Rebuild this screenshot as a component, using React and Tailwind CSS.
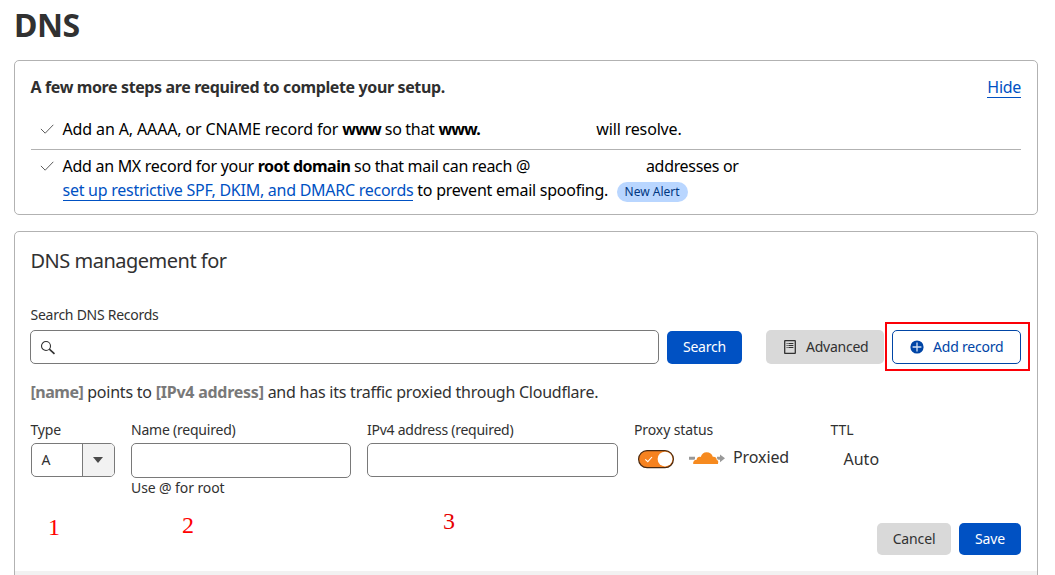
function Check() {
  return (
    <svg className="mt-[5px] h-[14px] w-[32px] shrink-0" viewBox="0 0 32 14" fill="none" stroke="#5c5c5c" strokeWidth="1">
      <path d="M9.9 6.9 L14.2 11.2 L22.3 2.8" />
    </svg>
  );
}

function SetupSteps() {
  return (
    <section className="mt-[11px] h-[155px] rounded-[5px] border border-[#b2b2b2] pl-[15.5px] pr-[16px] pt-[14px]">
      <div className="flex items-start justify-between">
        <h2 className="font-bold tracking-[-0.38px] text-[#2f2f2f]">A few more steps are required to complete your setup.</h2>
        <a className="h-[23px] border-b border-[#0051c3] tracking-[-0.3px] text-[#0051c3]">Hide</a>
      </div>
      <div className="mt-[18px] flex h-[33px] border-b border-[#b2b2b2]">
        <Check />
        <p>
          <span className="tracking-[-0.13px]">Add an A, AAAA, or CNAME record for </span>
          <b className="tracking-[-0.85px]">www</b>
          <span className="tracking-[-0.3px]"> so that </span>
          <b className="tracking-[-0.9px]">www.</b>
          <span className="ml-[116.5px] tracking-[-0.16px]">will resolve.</span>
        </p>
      </div>
      <div className="mt-[4px] flex">
        <Check />
        <div>
          <p>
            <span className="tracking-[-0.28px]">Add an MX record for your </span>
            <b className="tracking-[-0.54px]">root domain</b>
            <span className="tracking-[-0.32px]"> so that mail can reach @</span>
            <span className="ml-[116px] tracking-[-0.32px]">addresses or</span>
          </p>
          <div className="flex">
            <a className="h-[23px] border-b border-[#0051c3] tracking-[-0.26px] text-[#0051c3]">set up restrictive SPF, DKIM, and DMARC records</a>
            <span className="whitespace-pre tracking-[-0.25px]"> to prevent email spoofing.</span>
            <span className="ml-[9px] mt-[4px] flex h-[20px] w-[71px] items-center justify-center rounded-full bg-[#b9d6ff] pr-px text-[12px] text-[#003681]">New Alert</span>
          </div>
        </div>
      </div>
    </section>
  );
}

function SearchBar() {
  return (
    <div className="flex">
      <div className="-ml-[0.5px] h-[34px] w-[629px] rounded-[5px] border border-[#797979]">
        <svg className="ml-[9px] mt-[9px] h-[16px] w-[16px]" viewBox="0 0 16 16" fill="none" stroke="#313131">
          <circle cx="6" cy="6" r="4.5" strokeWidth="1.1" />
          <path d="M9.3 9.2 L14.5 13.9" strokeWidth="1.6" />
        </svg>
      </div>
      <button className="ml-[8px] mt-px flex h-[33px] w-[75px] items-center justify-center rounded-[5px] bg-[#0051c3] pb-[2px] text-[14px] tracking-[-0.2px] text-white">Search</button>
      <button className="ml-[24px] flex h-[34px] w-[118px] items-center rounded-[5px] bg-[#d9d9d9] pl-[18px] text-[14px] tracking-[-0.25px] text-[#313131]">
        <svg className="mr-[10px] h-[14px] w-[12px]" viewBox="0 0 12 14" fill="none" stroke="#313131">
          <rect x="0.7" y="0.7" width="10.6" height="12.6" rx="0.4" strokeWidth="1.3" />
          <path d="M2.6 3.5h1M4.4 3.5h5M2.6 5.5h1M4.4 5.5h5M2.6 7.5h1M4.4 7.5h5" strokeWidth="1" />
        </svg>
        Advanced
      </button>
      <div className="relative ml-[8px]">
        <button className="flex h-[34px] w-[129px] items-center rounded-[5px] border border-[#0045a6] pl-[17px] text-[14px] tracking-[-0.2px] text-[#0045a6]">
          <svg className="mr-[9px] h-[14px] w-[14px] shrink-0" viewBox="0 0 14 14">
            <circle cx="7" cy="7" r="6.6" fill="#0045a6" />
            <path d="M7 2.600v8.800M2.600 7h8.800" stroke="#d5e2f5" strokeWidth="1.3" />
          </svg>
          Add record
        </button>
        <div className="absolute -left-[7px] -top-[8px] h-[49px] w-[145px] border-2 border-[#fb0007]" />
      </div>
    </div>
  );
}

function ProxyStatus() {
  return (
    <div className="w-[196.5px]">
      <p className="text-[14px] leading-[20px] tracking-[-0.1px]">Proxy status</p>
      <div className="flex pl-[4px] pt-[4px]">
        <svg className="mt-[6px] h-[19px] w-[36px]" viewBox="0 0 36 19">
          <rect x="0.6" y="0.6" width="34.8" height="17.1" rx="8.5" fill="#f6821f" stroke="#4a2a12" strokeWidth="1.2" />
          <circle cx="27" cy="9.1" r="7.4" fill="#fff" />
          <path d="M7.3 9.3 L9.8 11.7 L14 7" fill="none" stroke="#fff" strokeWidth="1.1" />
        </svg>
        <svg className="ml-[15px] mt-[8px] h-[14px] w-[36px]" viewBox="0 0 36 14">
          <path d="M0 4.800h6v3H0z M28 4.800h3V2.500L36 6.300 31 10.200V7.800h-3z" fill="#999" />
          <g fill="#f68a1f" stroke="#fff" strokeWidth="1.600" paintOrder="stroke">
            <path d="M4.200 12 C3.800 9.300 5.300 7.800 7.600 7.700 C7.800 5.400 9.800 4.300 11.800 5 C12.600 1.800 14.800 0.200 17.600 0.200 C20.800 0.200 22.900 1.900 23.800 4.700 C26.200 4.400 27.600 5.600 27.700 7.700 C29.400 8.300 29.600 10 28.900 12 Z" />
          </g>
        </svg>
        <span className="ml-[8px] mt-px tracking-[-0.1px]">Proxied</span>
      </div>
    </div>
  );
}

function RecordForm() {
  return (
    <div className="flex h-[103px] text-[#313131]">
      <div className="w-[100.5px]">
        <p className="text-[14px] leading-[20px] tracking-[-0.15px]">Type</p>
        <div className="mt-[3px] flex h-[34px] w-[84px] overflow-hidden rounded-[5px] border border-[#797979]">
          <span className="w-[50px] pl-[10px] text-[14px] leading-[32px]">A</span>
          <span className="flex flex-1 items-center justify-center border-l border-[#797979] bg-[#f2f2f2]">
            <svg className="h-[6px] w-[10px]" viewBox="0 0 10 6"><path d="M0 0h10L5 6z" fill="#4a4a4a" /></svg>
          </span>
        </div>
        <p className="mt-[36px] pl-[17.5px] font-['Liberation_Serif',serif] text-[24px] leading-[28px] text-[#ff0000]">1</p>
      </div>
      <div className="w-[236px]">
        <p className="text-[14px] leading-[20px] tracking-[-0.22px]">Name (required)</p>
        <div className="mt-[3px] h-[35px] w-[220px] rounded-[5px] border border-[#797979]" />
        <p className="text-[14px] leading-[20px] tracking-[-0.1px]">Use @ for root</p>
        <p className="mt-[13px] pl-[51px] font-['Liberation_Serif',serif] text-[24px] leading-[28px] text-[#ff0000]">2</p>
      </div>
      <div className="w-[267px]">
        <p className="text-[14px] leading-[20px] tracking-[-0.25px]">IPv4 address (required)</p>
        <div className="mt-[3px] h-[34px] w-[251px] rounded-[5px] border border-[#797979]" />
        <p className="mt-[30px] pl-[76px] font-['Liberation_Serif',serif] text-[24px] leading-[28px] text-[#e60000]">3</p>
      </div>
      <ProxyStatus />
      <div>
        <p className="text-[14px] leading-[20px]">TTL</p>
        <p className="pl-[13px] pt-[7px]">Auto</p>
      </div>
    </div>
  );
}

export default function App() {
  return (
    <main className="h-[575px] w-[1055px] overflow-hidden whitespace-nowrap bg-white pl-[14px] pr-[17px] font-['Noto_Sans','Open_Sans',sans-serif] text-[16px] leading-[24px] text-black">
      <h1 className="pt-[1px] text-[32px] font-bold leading-[48px] tracking-[-0.5px] text-[#313131]">DNS</h1>
      <SetupSteps />
      <section className="mt-[16px] h-[400px] rounded-[5px] border border-[#b2b2b2] pt-[15px] text-[#313131]">
        <div className="h-[324px] pl-[15.5px] pr-[16px]">
          <h2 className="text-[20px] leading-[28px] tracking-[-0.5px]">DNS management for</h2>
          <p className="mb-[5px] mt-[30px] text-[14px] leading-[20px] tracking-[-0.26px]">Search DNS Records</p>
          <SearchBar />
          <p className="mb-[16px] mt-[16px]">
            <b className="tracking-[-0.5px] text-[#797979]">[name]</b>
            <span className="tracking-[-0.22px]"> points to </span>
            <b className="tracking-[-0.25px] text-[#797979]">[IPv4 address]</b>
            <span className="tracking-[-0.235px]"> and has its traffic proxied through Cloudflare.</span>
          </p>
          <RecordForm />
          <div className="flex justify-end gap-[8px] text-[14px]">
            <button className="h-[32px] w-[74px] rounded-[5px] bg-[#d9d9d9] tracking-[-0.15px]">Cancel</button>
            <button className="h-[32px] w-[62px] rounded-[5px] bg-[#0051c3] tracking-[-0.1px] text-white">Save</button>
          </div>
        </div>
        <div className="h-[60px] bg-[#f2f2f2]" />
      </section>
    </main>
  );
}
